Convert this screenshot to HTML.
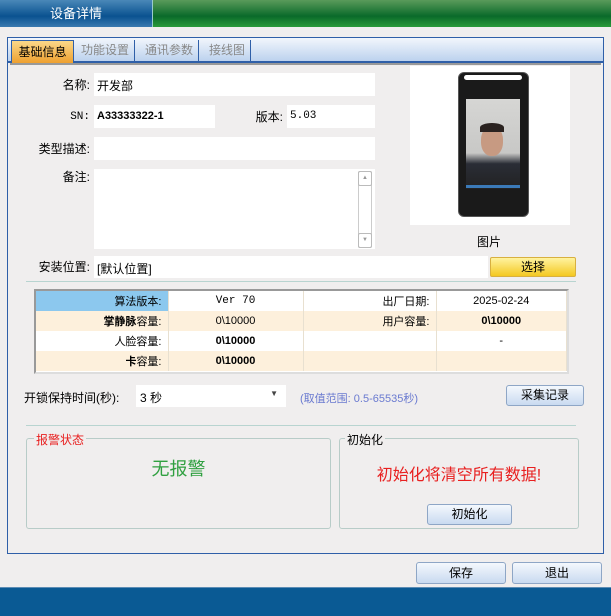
<!DOCTYPE html><html><head><meta charset="utf-8"><style>
*{margin:0;padding:0;box-sizing:border-box}
body{width:611px;height:616px;position:relative;background:#f0eeee;font-family:"Liberation Sans","Noto Sans CJK SC",sans-serif;font-size:12px;color:#000;overflow:hidden}
.a{position:absolute}
.inp{position:absolute;background:#fff}
.lbl{position:absolute;text-align:right;font-size:12px;line-height:14px}
.btn{position:absolute;border:1px solid #8ea6c6;border-radius:3px;background:linear-gradient(#f4f8fd,#c9daf0);text-align:center;font-size:12px}
table{border-collapse:collapse;font-size:11px}
td{height:20px;border-right:1px solid #e8e0d0;padding:0 6px}
.tab{position:absolute;top:40px;height:22px;line-height:20px;color:#888;font-size:12px;border-right:1px solid #2f5fa8;padding:0 5px}
</style></head><body>
<div class="a" style="left:0;top:0;width:611px;height:27px;background:linear-gradient(#5a9a5a,#0a6a2a 60%,#2a9a3a)"></div>
<div class="a" style="left:0;top:0;width:153px;height:27px;background:linear-gradient(#4a88b8,#0a5290 60%,#3a7ab0);border-right:1px solid #9cc;color:#fff;font-size:13px;text-align:center;line-height:27px">设备详情</div>
<div class="a" style="left:7px;top:37px;width:597px;height:517px;border:1px solid #2f5fa8;background:#f0eeee"></div>
<div class="a" style="left:8px;top:38px;width:595px;height:25px;background:linear-gradient(#f2f6fc,#bcd2ee);border-bottom:2px solid #2f5fa8"></div>
<div class="a" style="left:11px;top:40px;width:63px;height:23px;background:linear-gradient(#fbd889,#eea030);border:1px solid #2f5fa8;border-bottom:none;text-align:center;line-height:22px;font-size:12px">基础信息</div>
<div class="tab" style="left:76px">功能设置</div>
<div class="tab" style="left:140px">通讯参数</div>
<div class="tab" style="left:204px">接线图</div>
<div class="a" style="left:10px;top:63px;width:591px;height:2px;background:#999"></div>

<div class="lbl" style="left:30px;top:78px;width:60px">名称:</div>
<div class="inp" style="left:94px;top:73px;width:281px;height:23px;padding:4px 3px">开发部</div>
<div class="lbl" style="left:30px;top:110px;width:60px;font-family:'Liberation Mono';font-size:11px">SN:</div>
<div class="inp" style="left:94px;top:105px;width:121px;height:23px;padding:5px 3px;font-weight:bold;font-size:11px">A33333322-1</div>
<div class="lbl" style="left:230px;top:110px;width:53px">版本:</div>
<div class="inp" style="left:287px;top:105px;width:88px;height:23px;padding:5px 3px;font-family:'Liberation Mono';font-size:11px">5.03</div>
<div class="lbl" style="left:20px;top:142px;width:70px">类型描述:</div>
<div class="inp" style="left:94px;top:137px;width:281px;height:23px"></div>
<div class="lbl" style="left:30px;top:170px;width:60px">备注:</div>
<div class="inp" style="left:94px;top:169px;width:281px;height:80px"></div>
<div class="a" style="left:358px;top:171px;width:14px;height:77px;border:1px solid #ccc;border-radius:2px;background:#fff"></div>
<div class="a" style="left:358px;top:171px;width:14px;height:15px;border:1px solid #bbb;border-radius:2px;font-size:6px;color:#999;text-align:center;line-height:13px">▲</div>
<div class="a" style="left:358px;top:233px;width:14px;height:15px;border:1px solid #bbb;border-radius:2px;font-size:6px;color:#999;text-align:center;line-height:13px">▼</div>

<div class="inp" style="left:410px;top:66px;width:160px;height:159px"></div>
<div class="a" style="left:458px;top:72px;width:71px;height:145px;border-radius:6px;background:#1a1a1a;border:1px solid #555"></div>
<div class="a" style="left:464px;top:75px;width:58px;height:5px;border-radius:3px;background:#fff"></div>
<div class="a" style="left:466px;top:99px;width:54px;height:90px;background:linear-gradient(#d6d6d4,#c8c8c6 60%,#2a2d36 72%,#222)"></div>
<div class="a" style="left:481px;top:126px;width:22px;height:30px;border-radius:45%;background:#c79a82"></div>
<div class="a" style="left:480px;top:123px;width:24px;height:9px;border-radius:50% 50% 0 0;background:#2a2220"></div>
<div class="a" style="left:466px;top:185px;width:54px;height:3px;background:#3b7ab8"></div>
<div class="a" style="left:457px;top:233px;width:64px;text-align:center;font-size:12px">图片</div>

<div class="lbl" style="left:20px;top:260px;width:70px">安装位置:</div>
<div class="inp" style="left:94px;top:256px;width:394px;height:22px;padding:4px 3px">[默认位置]</div>
<div class="a" style="left:490px;top:257px;width:86px;height:20px;border:1px solid #d8b040;border-radius:2px;background:linear-gradient(#fff3a0,#f4c820);text-align:center;line-height:18px">选择</div>
<div class="a" style="left:26px;top:281px;width:550px;height:1px;background:#b8d4d0"></div>

<div class="a" style="left:34px;top:289px;width:535px;height:85px;border:2px solid #999;border-right-color:#ddd;border-bottom-color:#ddd;background:#fff">
<table style="width:531px">
<tr><td style="width:132px;background:#8cc8ee;text-align:right">算法版本:</td><td style="width:135px;text-align:center;font-family:'Liberation Mono'">Ver 70</td><td style="width:133px;text-align:right">出厂日期:</td><td style="text-align:center">2025-02-24</td></tr>
<tr style="background:#fdf0dc"><td style="text-align:right"><b>掌静脉</b>容量:</td><td style="text-align:center">0\10000</td><td style="text-align:right">用户容量:</td><td style="text-align:center;font-weight:bold">0\10000</td></tr>
<tr><td style="text-align:right">人脸容量:</td><td style="text-align:center;font-weight:bold">0\10000</td><td></td><td style="text-align:center">-</td></tr>
<tr style="background:#fdf0dc"><td style="text-align:right"><b>卡</b>容量:</td><td style="text-align:center;font-weight:bold">0\10000</td><td></td><td></td></tr>
</table></div>

<div class="a" style="left:24px;top:389px">开锁保持时间(秒):</div>
<div class="inp" style="left:136px;top:385px;width:150px;height:22px;padding:4px 4px">3 秒<span style="position:absolute;right:8px;top:4px;font-size:8px;color:#444">▼</span></div>
<div class="a" style="left:300px;top:390px;color:#6a7ad0;font-size:11px">(取值范围: 0.5-65535秒)</div>
<div class="btn" style="left:506px;top:385px;width:78px;height:21px;line-height:19px">采集记录</div>
<div class="a" style="left:26px;top:425px;width:550px;height:1px;background:#b8d4d0"></div>

<div class="a" style="left:26px;top:438px;width:305px;height:91px;border:1px solid #b8ccc8;border-radius:3px"></div>
<div class="a" style="left:34px;top:431px;padding:0 2px;background:#f0eeee;color:#e82020;font-size:12px">报警状态</div>
<div class="a" style="left:26px;top:455px;width:305px;text-align:center;color:#30a040;font-size:18px">无报警</div>
<div class="a" style="left:339px;top:438px;width:240px;height:91px;border:1px solid #b8ccc8;border-radius:3px"></div>
<div class="a" style="left:345px;top:431px;padding:0 2px;background:#f0eeee;font-size:12px">初始化</div>
<div class="a" style="left:339px;top:461px;width:240px;text-align:center;color:#e82020;font-size:16px">初始化将清空所有数据!</div>
<div class="btn" style="left:427px;top:504px;width:85px;height:21px;line-height:19px">初始化</div>

<div class="btn" style="left:416px;top:562px;width:90px;height:22px;line-height:20px">保存</div>
<div class="btn" style="left:512px;top:562px;width:90px;height:22px;line-height:20px">退出</div>
<div class="a" style="left:0;top:587px;width:611px;height:29px;background:#0a5a94;border-top:1px solid #5c8cb4"></div>
</body></html>
